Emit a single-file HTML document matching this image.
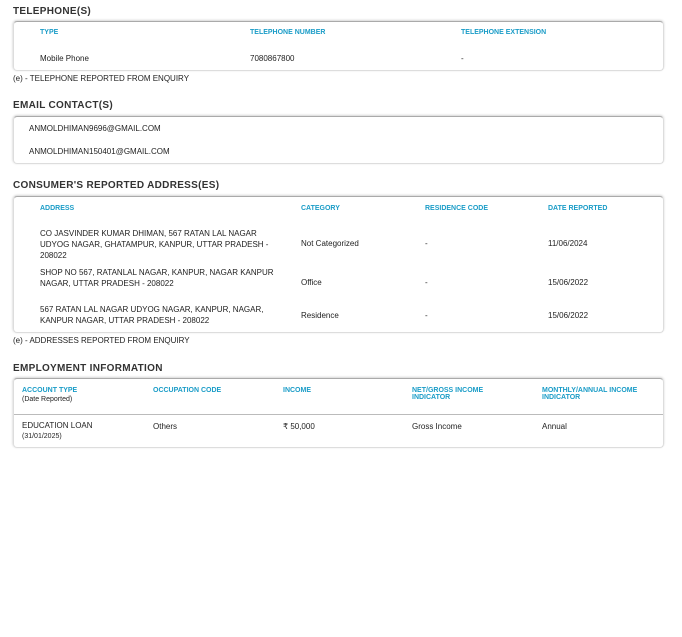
<!DOCTYPE html>
<html><head><style>
body{margin:0;width:682px;height:637px;background:#fff;font-family:"Liberation Sans",sans-serif;color:#222;position:relative;overflow:hidden}
div{position:absolute;white-space:nowrap}
.h{font-weight:bold;font-size:10px;letter-spacing:.3px;color:#333;left:13px}
.box{left:13px;width:649px;border:1px solid #ddd;border-top:1px solid #aaa;border-radius:4px;box-shadow:0 -1px 2px rgba(0,0,0,.15), -1px 0 2px rgba(0,0,0,.06)}
.c{font-size:7px;font-weight:bold;color:#1a9cc7;line-height:8px}
.t{font-size:8px;color:#222;line-height:11px}
.n{font-size:8px;color:#222;left:13px}
</style></head><body>
<div class="h" style="top:6px">TELEPHONE(S)</div>
<div class="box" style="top:21px;height:48px"></div>
<div class="c" style="left:40px;top:29px">TYPE</div>
<div class="c" style="left:250px;top:29px">TELEPHONE NUMBER</div>
<div class="c" style="left:461px;top:29px">TELEPHONE EXTENSION</div>
<div class="t" style="left:40px;top:53px">Mobile Phone</div>
<div class="t" style="left:250px;top:53px">7080867800</div>
<div class="t" style="left:461px;top:53px">-</div>
<div class="n" style="top:74px">(e) - TELEPHONE REPORTED FROM ENQUIRY</div>

<div class="h" style="top:100px">EMAIL CONTACT(S)</div>
<div class="box" style="top:116px;height:46px"></div>
<div class="t" style="left:29px;top:123px">ANMOLDHIMAN9696@GMAIL.COM</div>
<div class="t" style="left:29px;top:146px">ANMOLDHIMAN150401@GMAIL.COM</div>

<div class="h" style="top:180px">CONSUMER'S REPORTED ADDRESS(ES)</div>
<div class="box" style="top:196px;height:135px"></div>
<div class="c" style="left:40px;top:205px">ADDRESS</div>
<div class="c" style="left:301px;top:205px">CATEGORY</div>
<div class="c" style="left:425px;top:205px">RESIDENCE CODE</div>
<div class="c" style="left:548px;top:205px">DATE REPORTED</div>
<div class="t" style="left:40px;top:228px">CO JASVINDER KUMAR DHIMAN, 567 RATAN LAL NAGAR<br>UDYOG NAGAR, GHATAMPUR, KANPUR, UTTAR PRADESH -<br>208022</div>
<div class="t" style="left:301px;top:238px">Not Categorized</div>
<div class="t" style="left:425px;top:238px">-</div>
<div class="t" style="left:548px;top:238px">11/06/2024</div>
<div class="t" style="left:40px;top:267px">SHOP NO 567, RATANLAL NAGAR, KANPUR, NAGAR KANPUR<br>NAGAR, UTTAR PRADESH - 208022</div>
<div class="t" style="left:301px;top:277px">Office</div>
<div class="t" style="left:425px;top:277px">-</div>
<div class="t" style="left:548px;top:277px">15/06/2022</div>
<div class="t" style="left:40px;top:304px">567 RATAN LAL NAGAR UDYOG NAGAR, KANPUR, NAGAR,<br>KANPUR NAGAR, UTTAR PRADESH - 208022</div>
<div class="t" style="left:301px;top:310px">Residence</div>
<div class="t" style="left:425px;top:310px">-</div>
<div class="t" style="left:548px;top:310px">15/06/2022</div>
<div class="n" style="top:336px">(e) - ADDRESSES REPORTED FROM ENQUIRY</div>

<div class="h" style="top:363px">EMPLOYMENT INFORMATION</div>
<div class="box" style="top:378px;height:68px"></div>
<div style="left:14px;top:414px;width:649px;height:1px;background:#bbb"></div>
<div class="c" style="left:22px;top:387px">ACCOUNT TYPE</div>
<div class="t" style="left:22px;top:395px;font-size:7px;line-height:9px">(Date Reported)</div>
<div class="c" style="left:153px;top:387px">OCCUPATION CODE</div>
<div class="c" style="left:283px;top:387px">INCOME</div>
<div class="c" style="left:412px;top:387px;line-height:7px">NET/GROSS INCOME<br>INDICATOR</div>
<div class="c" style="left:542px;top:387px;line-height:7px">MONTHLY/ANNUAL INCOME<br>INDICATOR</div>
<div class="t" style="left:22px;top:421px;line-height:10px">EDUCATION LOAN<br><span style="font-size:7px">(31/01/2025)</span></div>
<div class="t" style="left:153px;top:421px">Others</div>
<div class="t" style="left:283px;top:421px">₹ 50,000</div>
<div class="t" style="left:412px;top:421px">Gross Income</div>
<div class="t" style="left:542px;top:421px">Annual</div>
</body></html>
